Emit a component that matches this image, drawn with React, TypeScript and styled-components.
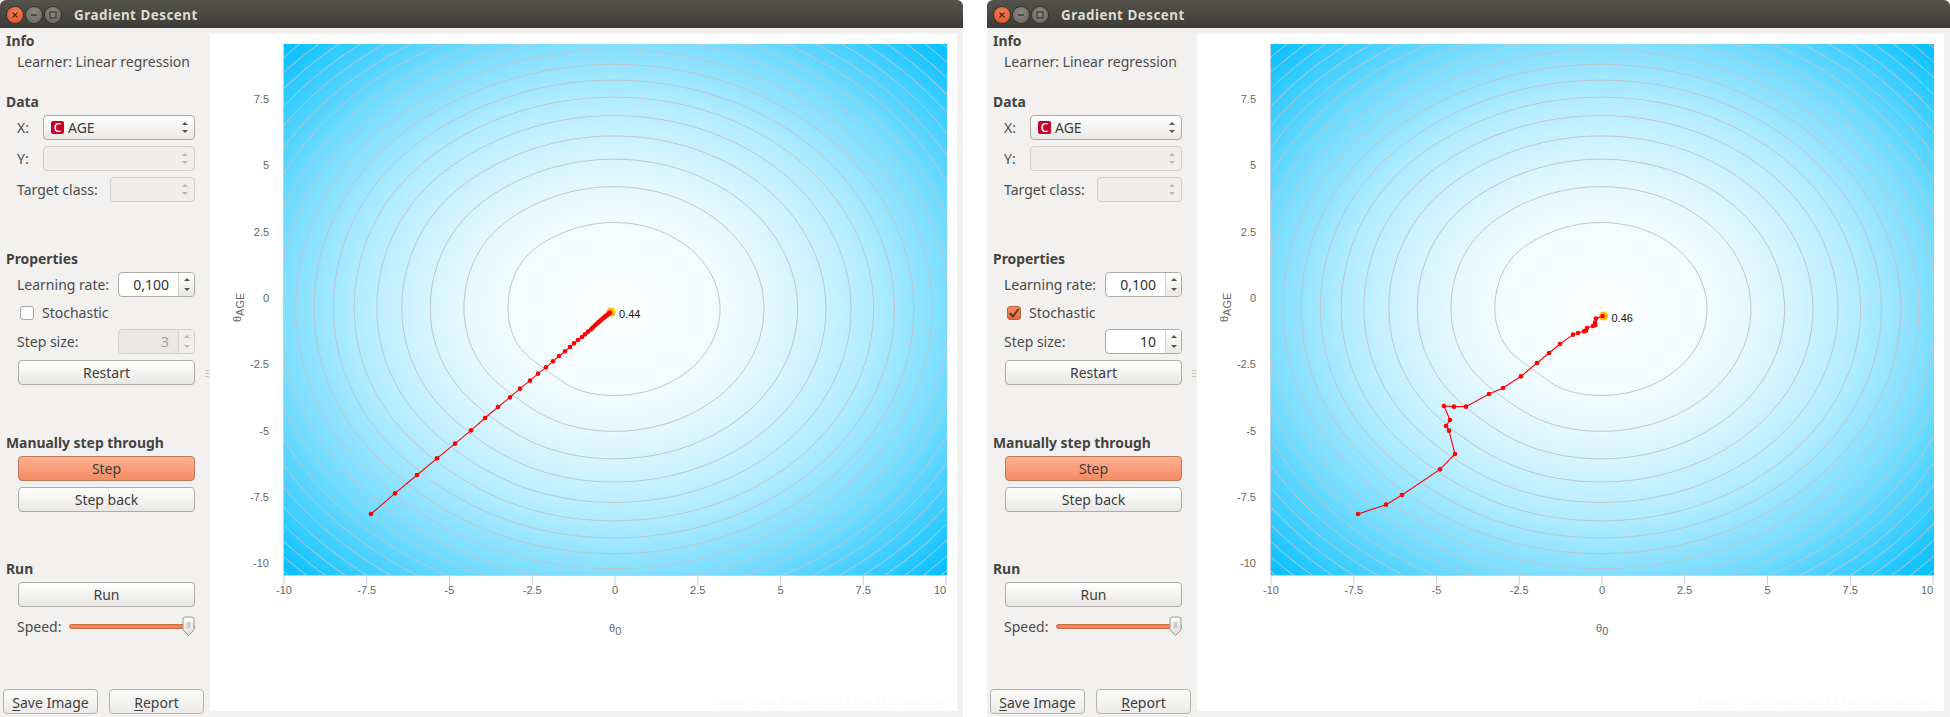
import React from "react";
import styled, { createGlobalStyle } from "styled-components";

const Global = createGlobalStyle`
  html, body { margin: 0; padding: 0; background: #fff; }
  body { font-family: "Noto Sans", "Open Sans", sans-serif; }
`;

const Page = styled.div`
  display: flex;
  gap: 24px;
  width: 1950px;
  height: 717px;
  overflow: hidden;
  background: #fff;
`;

const Window = styled.div`
  width: 963px;
  height: 717px;
  display: flex;
  flex-direction: column;
  background: #f2f1f0;
  border-radius: 6px 6px 0 0;
  overflow: hidden;
`;

const TitleBar = styled.div`
  height: 28px;
  flex: none;
  box-sizing: border-box;
  padding: 2px 0 0 7px;
  display: flex;
  align-items: center;
  gap: 3px;
  background: linear-gradient(#55534c, #3d3c37);
`;

const Dot = styled.div<{ $close?: boolean }>`
  width: 16px;
  height: 16px;
  border-radius: 50%;
  display: flex;
  align-items: center;
  justify-content: center;
  background: ${(p) => (p.$close ? "radial-gradient(circle at 50% 35%, #f5845a, #dc4a1e)" : "radial-gradient(circle at 50% 35%, #8c8a83, #64625b)")};
  box-shadow: 0 0 0 1px #33322e;
`;

const Title = styled.div`
  margin-left: 10px;
  font-size: 13.4px;
  font-weight: 700;
  letter-spacing: 0.5px;
  color: #dfdbd2;
`;

const Body = styled.div`
  flex: 1;
  display: flex;
  min-height: 0;
`;

const Sidebar = styled.div`
  width: 210px;
  flex: none;
  display: flex;
  flex-direction: column;
  padding: 4px 0 3px 6px;
  box-sizing: border-box;
  color: #4c4b4a;
  font-size: 14px;
  position: relative;
`;

const Heading = styled.div<{ $top: number }>`
  margin-top: ${(p) => p.$top}px;
  font-weight: 700;
  font-size: 13.9px;
  height: 18px;
  line-height: 18px;
  color: #444340;
`;

const InfoLine = styled.div`
  margin: 3px 0 0 11px;
  height: 18px;
  line-height: 18px;
`;

const Row = styled.div<{ $top: number }>`
  margin: ${(p) => p.$top}px 0 0 11px;
  width: 178px;
  height: 25px;
  display: flex;
  align-items: center;
  justify-content: space-between;
  line-height: 25px;
`;

const Combo = styled.div<{ $w: number; $off?: boolean }>`
  width: ${(p) => p.$w}px;
  height: 25px;
  box-sizing: border-box;
  display: flex;
  align-items: center;
  gap: 4px;
  padding: 0 6px 0 7px;
  border: 1px solid ${(p) => (p.$off ? "#d0cec9" : "#adaba6")};
  border-radius: 4px;
  background: ${(p) => (p.$off ? "#efeeec" : "linear-gradient(#ffffff, #e9e8e5)")};
  color: #3c3b39;
`;

const TypeBadge = styled.span`
  width: 13px;
  height: 13px;
  flex: none;
  border-radius: 2px;
  background: #c8002a;
  color: #fff;
  font-size: 12px;
  line-height: 13px;
  text-align: center;
  font-weight: 500;
`;

const ArrowBox = styled.span`
  margin-left: auto;
  display: flex;
  flex-direction: column;
  gap: 5px;
`;

const Tri = styled.span<{ $down?: boolean; $off?: boolean }>`
  width: 0;
  height: 0;
  border-left: 3px solid transparent;
  border-right: 3px solid transparent;
  ${(p) => (p.$down ? "border-top" : "border-bottom")}: 3.5px solid ${(p) => (p.$off ? "#b9b7b3" : "#55544f")};
`;

const Spin = styled.div<{ $off?: boolean }>`
  width: 77px;
  height: 25px;
  box-sizing: border-box;
  display: flex;
  border: 1px solid ${(p) => (p.$off ? "#d0cec9" : "#adaba6")};
  border-radius: 4px;
  overflow: hidden;
  background: ${(p) => (p.$off ? "#e9e8e6" : "#fff")};
`;

const SpinValue = styled.div<{ $off?: boolean }>`
  flex: 1;
  text-align: right;
  padding-right: 9px;
  line-height: 23px;
  color: ${(p) => (p.$off ? "#a5a4a1" : "#33322f")};
`;

const SpinArrows = styled.div<{ $off?: boolean }>`
  width: 15px;
  display: flex;
  flex-direction: column;
  align-items: center;
  justify-content: center;
  gap: 7px;
  border-left: 1px solid #d6d4d0;
  background: ${(p) => (p.$off ? "#efeeec" : "linear-gradient(#fff, #e8e7e4)")};
`;

const SmallTri = styled(Tri)`
  border-left-width: 3px;
  border-right-width: 3px;
  ${(p) => (p.$down ? "border-top-width: 3px" : "border-bottom-width: 3px")};
`;

const CheckRow = styled.div`
  margin: 7px 0 0 14px;
  height: 18px;
  display: flex;
  align-items: center;
  gap: 8px;
  line-height: 18px;
`;

const Box = styled.span<{ $on?: boolean }>`
  width: 14px;
  height: 14px;
  box-sizing: border-box;
  border-radius: 3px;
  display: flex;
  align-items: center;
  justify-content: center;
  border: 1px solid ${(p) => (p.$on ? "#b8623c" : "#a9a7a2")};
  background: ${(p) => (p.$on ? "linear-gradient(#f58a5e, #e8683c)" : "#fff")};
`;

const Button = styled.div<{ $top: number; $hot?: boolean }>`
  margin: ${(p) => p.$top}px 0 0 12px;
  width: 177px;
  height: 25px;
  box-sizing: border-box;
  border-radius: 4px;
  text-align: center;
  line-height: 23px;
  border: 1px solid ${(p) => (p.$hot ? "#c0785a" : "#aeaca7")};
  background: ${(p) => (p.$hot ? "linear-gradient(#fdb092, #f58c62)" : "linear-gradient(#ffffff, #e8e7e4)")};
  color: #3f3e3b;
`;

const SliderRow = styled.div`
  margin: 7px 0 0 11px;
  width: 178px;
  height: 24px;
  display: flex;
  align-items: center;
  gap: 8px;
`;

const Track = styled.div`
  flex: 1;
  height: 5px;
  box-sizing: border-box;
  border-radius: 3px;
  background: #f58358;
  border: 1px solid #cc6a44;
  position: relative;
`;

const Handle = styled.svg`
  position: absolute;
  right: -1px;
  top: -9px;
`;

const Footer = styled.div`
  margin-top: auto;
  display: flex;
  gap: 11px;
  margin-left: -3px;
`;

const FootButton = styled.div`
  width: 95px;
  height: 25px;
  box-sizing: border-box;
  text-align: center;
  line-height: 25px;
  border: 1px solid #b5b3ae;
  border-radius: 4px;
  background: linear-gradient(#fbfbfa, #ebeae8);
  color: #3f3e3b;
  u { text-underline-offset: 2px; }
`;

const Grip = styled.div`
  position: absolute;
  right: 1px;
  top: 342px;
  width: 4px;
  height: 7px;
  background: repeating-linear-gradient(#c8c6c2 0 1px, transparent 1px 3px);
`;

const PlotPanel = styled.div`
  width: 747px;
  height: 677px;
  margin-top: 6px;
  background: #fff;
`;

const PlotSvg = styled.svg`
  display: block;
`;

const CX = 614;
const CY = 309;
const RX = 106;
const RY = 86.5;
const LEVELS = 26;
const CORNER_LEVEL = 19.2;

const gradientStops = Array.from({ length: 21 }, (_, i) => {
  const t = i / 20;
  const c = (a: number, b: number) => Math.round(a + (b - a) * t);
  return { offset: Math.sqrt(t), color: `rgb(${c(255, 0)},${c(255, 191)},255)` };
});

const contourPath = (level: number) => {
  const steps = 160;
  const root = Math.sqrt(level);
  const pts: string[] = [];
  for (let i = 0; i < steps; i++) {
    const th = (i / steps) * Math.PI * 2;
    const dent = (0.05 / level) * Math.exp(-(((th - 2.3) / 0.28) ** 2));
    const bulge = (0.025 / root) * Math.exp(-(((th - 3.75) / 0.35) ** 2));
    const k = 1 - dent + bulge;
    pts.push(`${(CX + RX * root * k * Math.cos(th)).toFixed(1)} ${(CY + RY * root * k * Math.sin(th)).toFixed(1)}`);
  }
  return `M${pts.join("L")}Z`;
};

const contours = Array.from({ length: LEVELS }, (_, i) => contourPath(i + 1));

const px = (v: number) => 284 + (v + 10) * 33.1;
const xTicks = [-10, -7.5, -5, -2.5, 0, 2.5, 5, 7.5, 10];
const yTicks: [string, number][] = [
  ["7.5", 99], ["5", 165], ["2.5", 232], ["0", 298], ["-2.5", 364], ["-5", 431], ["-7.5", 497], ["-10", 563],
];

const toFirst = (p: [number, number]): [number, number] => [230 + p[0] / 3, 280 + p[1] / 3];
const toSecond = (p: [number, number]): [number, number] => [1280 - 987 + p[0] / 3, 280 + p[1] / 3];

const firstBase: [number, number][] = ([
  [423, 702], [495, 640], [561, 585], [621, 535], [675, 491], [723, 451], [765, 414], [804, 381], [840, 352],
  [870, 326], [900, 302], [924, 281], [948, 262], [969, 244], [987, 228], [1005, 214], [1020, 201], [1032, 190],
  [1044, 180], [1056, 171], [1065, 163], [1074, 155], [1083, 148], [1089, 142], [1095, 136], [1100, 132],
  [1105, 127], [1109, 124], [1113, 120], [1117, 117], [1120, 114], [1123, 112], [1126, 109], [1129, 107],
  [1132, 105], [1135, 102], [1137, 100], [1140, 98],
] as [number, number][]).map(toFirst);

const secondBase: [number, number][] = ([
  [234, 702], [318, 674], [366, 645], [480, 568], [525, 522], [507, 452], [498, 438], [510, 420], [492, 378],
  [522, 380], [558, 380], [627, 342], [669, 324], [723, 289], [771, 249], [807, 219], [840, 192], [879, 164],
  [894, 159], [912, 154], [918, 152], [921, 144], [939, 138], [946, 135], [945, 128], [948, 116], [968, 108],
] as [number, number][]).map(toSecond);

function Chart({ id, path, end, value }: { id: string; path: [number, number][]; end: [number, number]; value: string }) {
  return (
    <PlotSvg width={747} height={677} viewBox="210 34 747 677">
      <defs>
        <radialGradient
          id={`bg-${id}`}
          gradientUnits="userSpaceOnUse"
          cx={0}
          cy={0}
          r={1}
          gradientTransform={`translate(${CX} ${CY}) scale(${RX * Math.sqrt(CORNER_LEVEL)} ${RY * Math.sqrt(CORNER_LEVEL)})`}
        >
          {gradientStops.map((s) => (
            <stop key={s.offset} offset={s.offset} stopColor={s.color} />
          ))}
        </radialGradient>
        <clipPath id={`clip-${id}`}>
          <rect x={284} y={44} width={663} height={531} />
        </clipPath>
      </defs>
      <rect x={284} y={44} width={663} height={531} fill={`url(#bg-${id})`} />
      <g clipPath={`url(#clip-${id})`} fill="none" stroke="#bfc6ca" strokeWidth={1}>
        {contours.map((d, i) => (
          <path key={i} d={d} />
        ))}
      </g>
      <line x1={283.5} y1={44} x2={283.5} y2={575} stroke="#c0d0e0" />
      <line x1={284} y1={575.5} x2={947} y2={575.5} stroke="#c0d0e0" />
      {xTicks.map((t) => (
        <g key={t}>
          <line x1={px(t)} x2={px(t)} y1={575} y2={585} stroke="#c0d0e0" />
          <text x={t === 10 ? px(t) - 6 : px(t)} y={594} fontFamily="Liberation Sans" fontSize={11} fill="#666" textAnchor="middle">
            {t}
          </text>
        </g>
      ))}
      {yTicks.map(([label, y]) => (
        <text key={label} x={269} y={y + 4} fontFamily="Liberation Sans" fontSize={11} fill="#666" textAnchor="end">
          {label}
        </text>
      ))}
      <text x={609} y={632} fontFamily="Liberation Sans" fontSize={11} fill="#666">
        θ<tspan dy={3}>0</tspan>
      </text>
      <text transform="translate(241 322) rotate(-90)" fontFamily="Liberation Sans" fontSize={11} fill="#666">
        θ<tspan dy={3}>AGE</tspan>
      </text>
      <circle cx={end[0]} cy={end[1]} r={4.5} fill="#ffc000" />
      <polyline points={path.map((p) => p.join(",")).join(" ")} fill="none" stroke="#ff0000" strokeWidth={1.1} />
      {path.map((p, i) => (
        <circle key={i} cx={p[0]} cy={p[1]} r={2.3} fill="#ff0000" />
      ))}
      <text x={end[0] + 8} y={end[1] + 6} fontFamily="Liberation Sans" fontSize={11} fill="#111">
        {value}
      </text>
      <text x={947} y={705} fontFamily="Liberation Sans" fontSize={10} fill="#fbfbfb" textAnchor="end">
        Orange – Data Mining Fruitful &amp; Fun, Highcharts.com
      </text>
    </PlotSvg>
  );
}

function Arrows({ off }: { off?: boolean }) {
  return (
    <ArrowBox>
      <Tri $off={off} />
      <Tri $down $off={off} />
    </ArrowBox>
  );
}

function SpinBox({ value, off }: { value: string; off?: boolean }) {
  return (
    <Spin $off={off}>
      <SpinValue $off={off}>{value}</SpinValue>
      <SpinArrows $off={off}>
        <SmallTri $off={off} />
        <SmallTri $down $off={off} />
      </SpinArrows>
    </Spin>
  );
}

function GradientWindow({ id, stochastic, stepValue, path, end, value }: {
  id: string; stochastic: boolean; stepValue: string; path: [number, number][]; end: [number, number]; value: string;
}) {
  return (
    <Window>
      <TitleBar>
        <Dot $close>
          <svg width="8" height="8" viewBox="0 0 8 8"><path d="M1.5 1.5l5 5M6.5 1.5l-5 5" stroke="#4a1d0c" strokeWidth="1.2" /></svg>
        </Dot>
        <Dot>
          <svg width="8" height="8" viewBox="0 0 8 8"><path d="M1 4h6" stroke="#3a3934" strokeWidth="1.4" /></svg>
        </Dot>
        <Dot>
          <svg width="8" height="8" viewBox="0 0 8 8"><rect x="1" y="1" width="6" height="6" fill="none" stroke="#3a3934" strokeWidth="1.2" /></svg>
        </Dot>
        <Title>Gradient Descent</Title>
      </TitleBar>
      <Body>
        <Sidebar>
          <Heading $top={0}>Info</Heading>
          <InfoLine>Learner: Linear regression</InfoLine>
          <Heading $top={22}>Data</Heading>
          <Row $top={4}>
            <span>X:</span>
            <Combo $w={152}>
              <TypeBadge>C</TypeBadge>
              AGE
              <Arrows />
            </Combo>
          </Row>
          <Row $top={6}>
            <span>Y:</span>
            <Combo $w={152} $off><Arrows off /></Combo>
          </Row>
          <Row $top={6}>
            <span>Target class:</span>
            <Combo $w={85} $off><Arrows off /></Combo>
          </Row>
          <Heading $top={48}>Properties</Heading>
          <Row $top={4}>
            <span>Learning rate:</span>
            <SpinBox value="0,100" />
          </Row>
          <CheckRow>
            <Box $on={stochastic}>
              {stochastic && (
                <svg width="12" height="12" viewBox="0 0 12 12"><path d="M2 6l3 3.5L10.5 2" fill="none" stroke="#5a3a2c" strokeWidth="2" /></svg>
              )}
            </Box>
            Stochastic
          </CheckRow>
          <Row $top={7}>
            <span>Step size:</span>
            <SpinBox value={stepValue} off={!stochastic} />
          </Row>
          <Button $top={6}>Restart</Button>
          <Heading $top={49}>Manually step through</Heading>
          <Button $top={4} $hot>Step</Button>
          <Button $top={6}>Step back</Button>
          <Heading $top={48}>Run</Heading>
          <Button $top={4}>Run</Button>
          <SliderRow>
            <span>Speed:</span>
            <Track>
              <Handle width="13" height="21" viewBox="0 0 13 21">
                <defs>
                  <linearGradient id={`h-${id}`} x1="0" y1="0" x2="0" y2="1">
                    <stop offset="0" stopColor="#fbfbfa" />
                    <stop offset="1" stopColor="#dedcd9" />
                  </linearGradient>
                </defs>
                <path d="M1 3a2 2 0 0 1 2-2h7a2 2 0 0 1 2 2v11l-5.500 5.500L1 14z" fill={`url(#h-${id})`} stroke="#9d9b96" />
                <path d="M4.500 7h4M4.500 9h4M4.500 11h4" stroke="#aeaca7" />
              </Handle>
            </Track>
          </SliderRow>
          <Footer>
            <FootButton><u>S</u>ave Image</FootButton>
            <FootButton><u>R</u>eport</FootButton>
          </Footer>
          <Grip />
        </Sidebar>
        <PlotPanel>
          <Chart id={id} path={path} end={end} value={value} />
        </PlotPanel>
      </Body>
    </Window>
  );
}

export default function App() {
  return (
    <Page>
      <Global />
      <GradientWindow id="a" stochastic={false} stepValue="3" path={firstBase} end={[611, 312]} value="0.44" />
      <GradientWindow id="b" stochastic stepValue="10" path={secondBase} end={[616.5, 316]} value="0.46" />
    </Page>
  );
}
